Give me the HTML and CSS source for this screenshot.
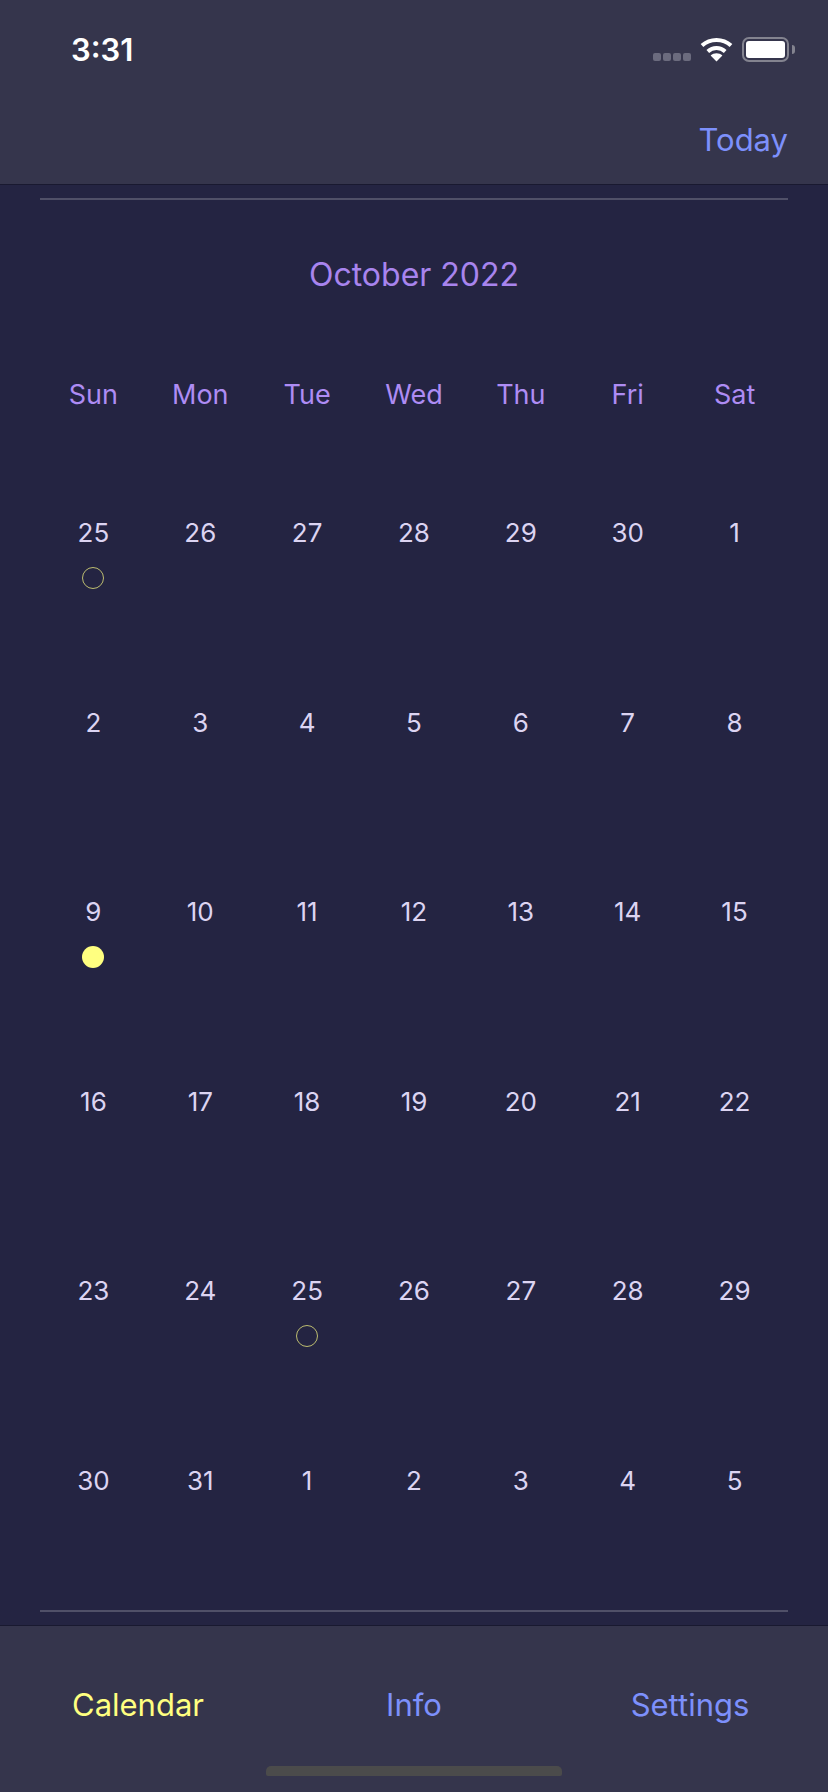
FILE: index.html
```html
<!DOCTYPE html>
<html lang="en">
<head>
    <meta charset="UTF-8">
    <meta name="viewport" content="width=device-width, initial-scale=1.0">
    <title>Calendar</title>
    <link rel="stylesheet" href="styles.css">
</head>
<body>
    <header class="top-bar">
        <div class="status-bar">
            <span class="time">3:31</span>
            <div class="status-icons">
                <div class="signal"><i></i><i></i><i></i><i></i></div>
                <svg class="wifi" width="33" height="25" viewBox="0 0 33 25">
                    <path d="M2 8.6C10.2 1.2 22.8 1.2 31 8.6" fill="none" stroke="#fff" stroke-width="4"/>
                    <path d="M7.8 14.4C12.8 10 20.2 10 25.2 14.4" fill="none" stroke="#fff" stroke-width="4"/>
                    <path d="M16.5 24.6L10.6 18.4C14 15.6 19 15.6 22.4 18.4Z" fill="#fff"/>
                </svg>
                <div class="battery"><div class="battery-level"></div></div>
                <div class="battery-nub"></div>
            </div>
        </div>
        <div class="nav-row"><a class="today">Today</a></div>
    </header>

    <main class="calendar">
        <div class="rule"></div>
        <h1 class="month">October 2022</h1>
        <div class="weekdays">
            <span>Sun</span><span>Mon</span><span>Tue</span><span>Wed</span><span>Thu</span><span>Fri</span><span>Sat</span>
        </div>
        <div class="days">
            <div class="day">25<span class="dot ring"></span></div>
            <div class="day">26</div>
            <div class="day">27</div>
            <div class="day">28</div>
            <div class="day">29</div>
            <div class="day">30</div>
            <div class="day">1</div>

            <div class="day">2</div>
            <div class="day">3</div>
            <div class="day">4</div>
            <div class="day">5</div>
            <div class="day">6</div>
            <div class="day">7</div>
            <div class="day">8</div>

            <div class="day">9<span class="dot full"></span></div>
            <div class="day">10</div>
            <div class="day">11</div>
            <div class="day">12</div>
            <div class="day">13</div>
            <div class="day">14</div>
            <div class="day">15</div>

            <div class="day">16</div>
            <div class="day">17</div>
            <div class="day">18</div>
            <div class="day">19</div>
            <div class="day">20</div>
            <div class="day">21</div>
            <div class="day">22</div>

            <div class="day">23</div>
            <div class="day">24</div>
            <div class="day">25<span class="dot ring"></span></div>
            <div class="day">26</div>
            <div class="day">27</div>
            <div class="day">28</div>
            <div class="day">29</div>

            <div class="day">30</div>
            <div class="day">31</div>
            <div class="day">1</div>
            <div class="day">2</div>
            <div class="day">3</div>
            <div class="day">4</div>
            <div class="day">5</div>
        </div>
        <div class="rule rule-bottom"></div>
    </main>

    <footer class="tab-bar">
        <div class="tabs">
            <a class="tab active">Calendar</a>
            <a class="tab">Info</a>
            <a class="tab">Settings</a>
        </div>
        <div class="home-indicator"></div>
    </footer>
</body>
</html>
```

FILE: styles.css
```css
html, body {
    height: 100%;
}

body {
    margin: 0;
    display: flex;
    flex-direction: column;
    font-family: Inter, "Liberation Sans", sans-serif;
    background-color: #242442;
    color: #dcd4f2;
    overflow: hidden;
}

.top-bar {
    height: 185px;
    box-sizing: border-box;
    background-color: #35354c;
    border-bottom: 1px solid #191930;
    flex: none;
}

.status-bar {
    height: 120px;
    display: flex;
    justify-content: space-between;
    align-items: flex-start;
    padding: 31px 33px 0 71px;
    box-sizing: border-box;
}

.time {
    color: #fff;
    font-size: 31px;
    font-weight: 600;
    line-height: 38px;
}

.status-icons {
    display: flex;
    align-items: flex-start;
    padding-top: 6px;
}

.signal {
    display: flex;
    gap: 2px;
    margin-top: 16px;
    margin-right: 9px;
}

.signal i {
    width: 8px;
    height: 8px;
    border-radius: 2px;
    background-color: #6b6b7e;
}

.wifi {
    margin-right: 9px;
}

.battery {
    width: 47px;
    height: 25px;
    box-sizing: border-box;
    border: 2px solid #83838f;
    border-radius: 7px;
    padding: 2px;
}

.battery-level {
    height: 100%;
    background-color: #fff;
    border-radius: 3px;
}

.battery-nub {
    width: 3px;
    height: 9px;
    margin: 8px 0 0 3px;
    background-color: #83838f;
    border-radius: 0 3px 3px 0;
}

.nav-row {
    display: flex;
    justify-content: flex-end;
    padding-right: 40px;
}

.today {
    color: #7d90fb;
    font-size: 31px;
    line-height: 40px;
}

.calendar {
    flex: 1;
    min-height: 0;
    padding: 13px 40px 0;
    display: flex;
    flex-direction: column;
}

.rule {
    height: 2px;
    background-color: #505068;
    flex: none;
}

.month {
    margin: 55px 0 0;
    font-size: 32px;
    line-height: 40px;
    font-weight: 400;
    text-align: center;
    color: #a884ee;
}

.weekdays {
    display: grid;
    grid-template-columns: repeat(7, 1fr);
    margin-top: 84px;
    font-size: 27px;
    line-height: 32px;
    text-align: center;
    color: #ae8cf4;
}

.days {
    display: grid;
    grid-template-columns: repeat(7, 1fr);
    grid-template-rows: repeat(5, 189.5px) auto;
    margin-top: 106px;
    font-size: 26px;
    line-height: 32px;
    text-align: center;
}

.dot {
    display: block;
    width: 22px;
    height: 22px;
    box-sizing: border-box;
    margin: 18px auto 0;
    border-radius: 50%;
}

.dot.ring {
    border: 1.5px solid #bcbc70;
}

.dot.full {
    background-color: #ffff80;
}

.rule-bottom {
    margin-top: auto;
    margin-bottom: 13px;
}

.tab-bar {
    height: 167px;
    flex: none;
    background-color: #35354c;
    border-top: 1px solid #191930;
    box-sizing: border-box;
    display: flex;
    flex-direction: column;
    align-items: center;
}

.tabs {
    width: 100%;
    display: grid;
    grid-template-columns: repeat(3, 1fr);
    margin-top: 59px;
    font-size: 31px;
    line-height: 40px;
    text-align: center;
    color: #7d90fb;
}

.tab.active {
    color: #ffff80;
}

.home-indicator {
    width: 296px;
    height: 10px;
    margin-top: 41px;
    background-color: #4b4b4b;
    border-radius: 5px 5px 2px 2px;
}
```
